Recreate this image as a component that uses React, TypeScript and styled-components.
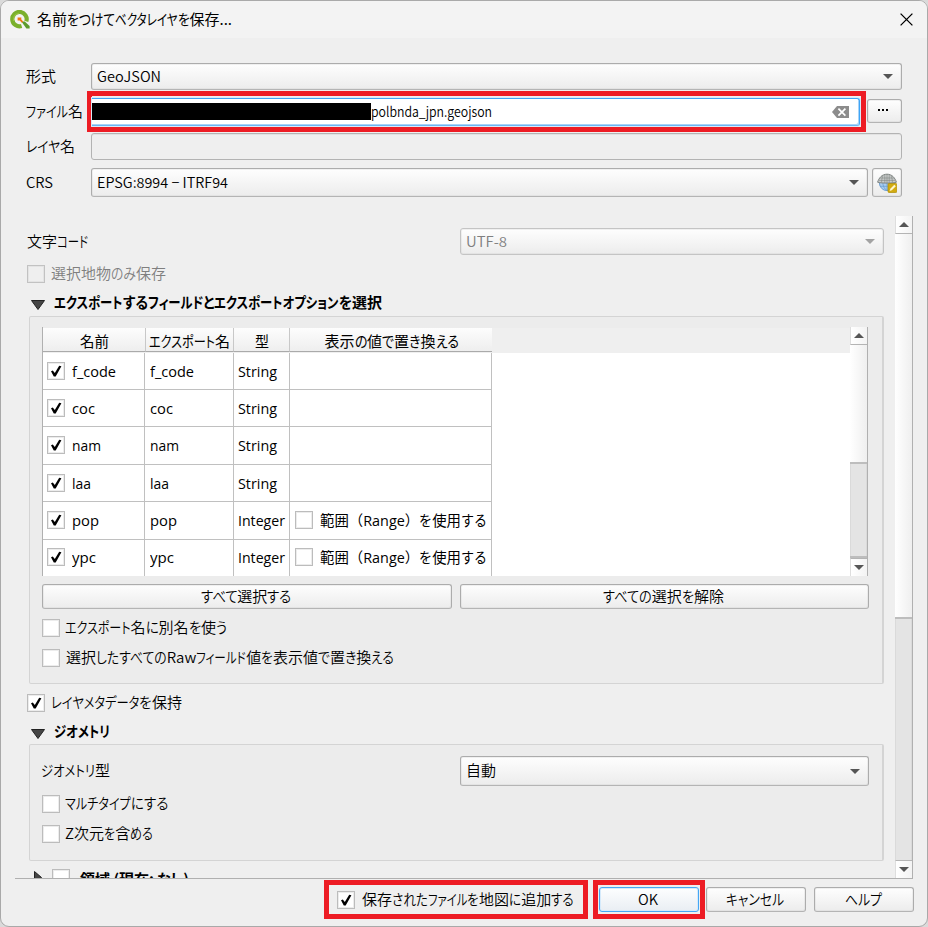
import React, { useLayoutEffect, useRef } from "react";
import styled, { createGlobalStyle, css } from "styled-components";

const uiFont = '"Noto Sans CJK JP", "Liberation Sans", sans-serif';
const tableFont = '"Open Sans", "Noto Sans CJK JP", sans-serif';

const GlobalStyle = createGlobalStyle`
  * { box-sizing: border-box; }
  body {
    margin: 0;
    background: #dadada;
    color: #000;
    font: 350 15px/20px ${uiFont};
    white-space: nowrap;
    overflow: hidden;
  }
`;

/* ---------- text with proportional, condensed kana ---------- */

type Tone = "label" | "title" | "header" | "bold" | "latin" | "table";

const TextLine = styled.span<{ $tone: Tone; $width: number; $dim?: boolean }>`
  display: block;
  flex: none;
  width: ${p => p.$width}px;
  height: 20px;
  margin-bottom: 2px;
  color: ${p => (p.$dim ? "#7f7f7f" : "#000")};
  font-feature-settings: "palt";
  ${p => p.$tone === "title" && css`font-weight: 400;`}
  ${p => p.$tone === "header" && css`font-weight: 400; margin-bottom: 0;`}
  ${p => p.$tone === "bold" && css`font-weight: 700;`}
  ${p => p.$tone === "latin" && css`font-size: 14px;`}
  ${p => p.$tone === "table" && css`
    margin-bottom: 0;
    font-family: ${tableFont};
    font-weight: 400;
    font-size: 14.4px;
    font-feature-settings: normal;
  `}
`;

const Run = styled.span`
  display: inline-block;
  white-space: pre;
  transform-origin: left center;
`;

const KATAKANA = /^[ァ-ヺー]/;
const HIRAGANA = /^[ぁ-ゖ]/;
const kanaScale = (s: string) => (KATAKANA.test(s) ? 0.81 : HIRAGANA.test(s) ? 0.9 : 0);

function Text({ width, tone = "label", dim, children }: { width: number; tone?: Tone; dim?: boolean; children: string }) {
  const ref = useRef<HTMLSpanElement>(null);
  const runs = children.match(/[ァ-ヺー]+|[ぁ-ゖ]+|[^ァ-ヺーぁ-ゖ]+/g) ?? [];

  useLayoutEffect(() => {
    const spans = Array.from(ref.current!.children) as HTMLElement[];
    spans.forEach(s => { s.style.transform = ""; s.style.marginRight = ""; });
    const widths = spans.map(s => s.getBoundingClientRect().width);
    let scales = runs.map(kanaScale);
    if (!scales.some(Boolean)) scales = scales.map(() => 1);
    const fixed = widths.reduce((a, w, i) => a + (scales[i] ? 0 : w), 0);
    const flexible = widths.reduce((a, w, i) => a + w * scales[i], 0);
    const factor = (width - fixed) / flexible;
    spans.forEach((s, i) => {
      if (!scales[i]) return;
      const k = scales[i] * factor;
      s.style.transform = `scaleX(${k})`;
      s.style.marginRight = `${widths[i] * (k - 1)}px`;
    });
  }, [children, width]);

  return (
    <TextLine ref={ref} $tone={tone} $width={width} $dim={dim}>
      {runs.map((r, i) => <Run key={i}>{r}</Run>)}
    </TextLine>
  );
}

/* ---------- icons ---------- */

const Svg = styled.svg`display: block; flex: none;`;

const Arrow = ({ up, color = "#555" }: { up?: boolean; color?: string }) => (
  <Svg width="10" height="5" viewBox="0 0 10 5">
    <path d={up ? "M0 5h10L5 0z" : "M0 0h10L5 5z"} fill={color} />
  </Svg>
);

const QgisLogo = () => (
  <Svg width="20" height="19" viewBox="0 0 20 19">
    <path d="M16.3 11.4A7.2 7.2 0 1 0 11.6 16" fill="none" stroke="#7ab02c" strokeWidth="4.2" />
    <path d="M9 3.4C4 4 3 8 3.6 11" fill="none" stroke="#93c13d" strokeWidth="1.2" />
    <path d="M11.4 11.400h3.400L19.6 16v2.6h-3.2z" fill="#5c9a2b" />
    <path d="M7.600 7.400h3.800l-.2 1.800 2 2.400-1.400 1.200-2-2.400-2.200.2z" fill="#ee7913" />
  </Svg>
);

const CloseIcon = () => (
  <Svg width="13" height="13" viewBox="0 0 13 13">
    <path d="M.6.6l11.8 11.8M12.4.6L.6 12.4" stroke="#000" strokeWidth="1.3" />
  </Svg>
);

const ClearIcon = () => (
  <Svg width="17" height="12" viewBox="0 0 17 12">
    <path d="M0 6L5 0h12v12H5z" fill="#8c8c8c" />
    <path d="M6.4 2.6l7 7M13.4 2.6l-7 7" stroke="#fff" strokeWidth="1.7" />
  </Svg>
);

const CrsIcon = () => (
  <Svg width="20" height="20" viewBox="0 0 20 20">
    <circle cx="10" cy="10" r="7.6" fill="#a9cdf0" stroke="#6c9fd2" />
    <path d="M10 9v9M5.8 9c0 4 1.5 7 4.2 8.5M14.200 9c0 4-1.500 7-4.200 8.500M3 13.300h14" fill="none" stroke="#6c9fd2" strokeWidth=".8" />
    <path d="M.6 9.200C2 4.800 5 1.200 10 1.200s8 3.600 9.400 8c-3 1.200-15.800 1.200-18.800 0z" fill="#c9cccb" stroke="#7e8482" />
    <path d="M10 1.200v9M6 2.500C5 5 4.600 7 4.600 9.800M14 2.500c1 2.500 1.400 4.500 1.400 7.300M7.800 2v8M12.200 2v8M3 5h14M1.800 7.400h16.400" fill="none" stroke="#7e8482" strokeWidth=".6" />
    <rect x="11" y="10.500" width="8.800" height="9" rx="1" fill="#d2ab10" stroke="#ae8c05" strokeWidth=".7" />
    <path d="M12.600 18l.7-2.300 4-4 1.500 1.500-4 4z" fill="#fff6cd" />
  </Svg>
);

const Disclosure = ({ closed }: { closed?: boolean }) => (
  <Svg width="14" height="12" viewBox="0 0 14 12">
    <path d={closed ? "M3.500.5v12L10.500 6.500z" : "M.5 1.500h13L7 10.500z"} fill="#454545" stroke="#222" />
  </Svg>
);

/* ---------- controls ---------- */

const raised = css`
  border: 1px solid #acacac;
  border-bottom-color: #b4b4b4;
  border-radius: 3px;
  background: linear-gradient(#fefefe, #ececec);
  box-shadow: inset 0 0 0 1px rgba(200, 200, 200, 0.25);
`;

const ComboBox = styled.div<{ $width: number; $height: number; $disabled?: boolean }>`
  ${raised}
  display: flex;
  align-items: center;
  justify-content: space-between;
  flex: none;
  width: ${p => p.$width}px;
  height: ${p => p.$height}px;
  padding: 0 8px 0 5px;
  ${p => p.$disabled && css`border-color: #c4c4c4;`}
`;

const Button = styled.div<{ $width: number; $height: number; $focused?: boolean }>`
  ${raised}
  display: flex;
  align-items: center;
  justify-content: center;
  flex: none;
  width: ${p => p.$width}px;
  height: ${p => p.$height}px;
  ${p => p.$width > 30 && css`padding-right: 2px;`}
  ${p => p.$focused && css`
    border-color: #45a7f5;
    background: linear-gradient(#fdfeff, #e9eef3);
    box-shadow: inset 0 0 0 1px #d5eafb;
  `}
`;

const BrowseButton = styled(Button)`
  margin-bottom: 2px;
  padding-right: 4px;
`;

const Box = styled.span<{ $disabled?: boolean }>`
  display: block;
  flex: none;
  width: 18px;
  height: 18px;
  border: 1px solid ${p => (p.$disabled ? "#c2c2c2" : "#bcbcbc")};
  background: ${p => (p.$disabled ? "#efefef" : "#fff")};
  box-shadow: inset 0 0 0 1px ${p => (p.$disabled ? "#e4e4e4" : "#ececec")};
`;

const CheckBox = ({ checked, disabled }: { checked?: boolean; disabled?: boolean }) => (
  <Box $disabled={disabled}>
    {checked && (
      <Svg width="16" height="16" viewBox="0 0 16 16">
        <path d="M3 8.200l1.800-.8 2 2.600 4.400-7.300 2.200.5-5.700 10.300H5.800z" fill="#000" />
      </Svg>
    )}
  </Box>
);

const Option = styled.div<{ $top: number; $gap?: number; $left?: number }>`
  display: flex;
  align-items: center;
  gap: ${p => p.$gap ?? 6}px;
  height: 18px;
  margin: ${p => p.$top}px 0 0 ${p => p.$left ?? 0}px;
`;

const Marked = styled.div<{ $width: number; $height: number }>`
  display: flex;
  align-items: center;
  flex: none;
  width: ${p => p.$width}px;
  height: ${p => p.$height}px;
  border: 5px solid #ed1c24;
`;

/* ---------- window ---------- */

const Window = styled.div`
  display: flex;
  flex-direction: column;
  width: 928px;
  height: 927px;
  overflow: hidden;
  border: 1px solid #a9a9a9;
  border-radius: 9px;
  background: #efefef;
`;

const TitleBar = styled.div`
  display: flex;
  align-items: center;
  flex: none;
  height: 37px;
  padding: 0 14px 0 9px;
  background: #f3f3f3;
`;

const TitleText = styled.div`flex: 1; padding-left: 7px;`;

const Form = styled.div`padding: 25px 0 0 25px;`;

const FormRow = styled.div<{ $height: number; $top?: number }>`
  display: flex;
  align-items: center;
  height: ${p => p.$height}px;
  margin-top: ${p => p.$top ?? 0}px;
`;

const FormLabel = styled.div<{ $width?: number }>`flex: none; width: ${p => p.$width ?? 65}px;`;

const PathInput = styled.div`
  display: flex;
  align-items: center;
  width: 768px;
  height: 28px;
  border: solid #3fa5f6;
  border-width: 1px 1px 1px 0;
  border-bottom-color: #6cb5f2;
  border-radius: 0 3px 3px 0;
  background: #fff;
  box-shadow: 0 0 0 1px #d9eaf8, inset -1px -1px 0 #a8d4f8;
`;

const Redaction = styled.div`flex: none; width: 279px; height: 17px; background: #000;`;
const PathEnd = styled.div`display: flex; flex: 1; justify-content: flex-end; padding-right: 10px;`;

const EmptyInput = styled.div`
  width: 811px;
  height: 27px;
  border: 1px solid #b3b3b3;
  border-radius: 3px;
  background: #efefef;
  box-shadow: inset 0 1px 0 #e2e2e2;
`;

const Dots = styled.div`
  display: flex;
  gap: 2px;
  margin-bottom: 1px;
  span { width: 2px; height: 2px; background: #000; }
`;

const Spacer = styled.div<{ $w: number }>`flex: none; width: ${p => p.$w}px;`;

/* ---------- scrolled options ---------- */

const ScrollArea = styled.div`
  display: flex;
  flex: none;
  width: 898px;
  height: 663px;
  margin: 19px 0 0 14px;
  overflow: hidden;
  border-right: 1px solid #b0b0b0;
  border-bottom: 1px solid #b0b0b0;
`;

const ScrollContent = styled.div`width: 880px; flex: none;`;

const EncodingRow = styled.div`
  display: flex;
  align-items: center;
  height: 27px;
  margin: 12px 0 0 12px;
`;

const Heading = styled.div`
  display: flex;
  align-items: center;
  gap: 9px;
  height: 20px;
  margin: 10px 0 0 16px;
  svg { margin-top: 4px; }
`;

const GroupBox = styled.div<{ $top: number; $height: number }>`
  width: 855px;
  height: ${p => p.$height}px;
  margin: ${p => p.$top}px 0 0 14px;
  padding-left: 12px;
  border: 1px solid #d4d4d4;
  border-right-width: 2px;
  border-radius: 2px;
  background: #ececec;
`;

const ButtonPair = styled.div`display: flex; gap: 8px; margin-top: 8px;`;

const GeometryRow = styled.div`
  display: flex;
  align-items: center;
  height: 30px;
  margin: 11px 0 0 -1px;
`;

const ClippedHeading = styled.div`
  display: flex;
  align-items: flex-start;
  margin: 8px 0 0 16px;
  height: 9px;
  overflow: hidden;
  svg { margin-top: 2px; }
`;

const ScrollBar = styled.div`display: flex; flex-direction: column; flex: none; width: 17px;`;

const ArrowCell = styled.div<{ $h: number; $end?: boolean }>`
  display: flex;
  align-items: center;
  justify-content: center;
  flex: none;
  height: ${p => p.$h}px;
  border-left: 1px solid #dedede;
  ${p => (p.$end ? "border-top" : "border-bottom")}: 1px solid #b4b4b4;
  background: linear-gradient(90deg, #fff, #f3f3f3);
`;

const Thumb = styled.div<{ $h: number }>`
  flex: none;
  height: ${p => p.$h}px;
  border-bottom: 2px solid #bdbdbd;
  background: linear-gradient(90deg, #fff, #efefef);
`;

const Groove = styled.div`
  flex: 1;
  border: solid #dadada;
  border-width: 0 1px;
  background: #e4e4e4;
`;

/* ---------- field table ---------- */

const TableFrame = styled.div`
  display: flex;
  width: 826px;
  height: 249px;
  margin-top: 10px;
  overflow: hidden;
  border: solid #b0b0b0;
  border-width: 0 1px;
  background: #fff;
`;

const TableBody = styled.div`width: 807px; flex: none; padding-top: 1px; background: #ececec;`;
const HeaderStrip = styled.div`display: flex; height: 25px; background: #efefef;`;

const HeaderCell = styled.div<{ $w: number }>`
  display: flex;
  align-items: center;
  justify-content: center;
  width: ${p => p.$w}px;
  height: 24px;
  padding-top: 3px;
  border-right: 1px solid #c8c8c8;
  border-bottom: 1px solid #aaa;
  background: linear-gradient(#fdfdfd, #eee);
  &:last-child { border-right: 0; padding-left: 1px; }
`;

const Rows = styled.div`height: 223px; overflow: hidden; background: #fff;`;
const TableRow = styled.div<{ $h: number }>`
  display: flex;
  height: ${p => p.$h}px;
`;
const Cell = styled.div<{ $w: number; $pad?: number; $last?: boolean }>`
  display: flex;
  align-items: center;
  gap: 7px;
  width: ${p => p.$w}px;
  padding: ${p => (p.$last ? 0 : 1)}px 0 0 ${p => p.$pad ?? 4}px;
  border-right: 1px solid #c0c0c0;
  border-bottom: ${p => (p.$last ? 0 : 1)}px solid #c0c0c0;
  ${Box} { margin-bottom: 2px; }
`;

const fields = [
  { name: "f_code", width: 44, type: "String", h: 37 },
  { name: "coc", width: 23, type: "String", h: 37 },
  { name: "nam", width: 29, type: "String", h: 38 },
  { name: "laa", width: 19, type: "String", h: 37 },
  { name: "pop", width: 27, type: "Integer", h: 38 },
  { name: "ypc", width: 24, type: "Integer", h: 36 },
];

const FieldTable = () => (
  <TableFrame>
    <TableBody>
      <HeaderStrip>
        <HeaderCell $w={103}><Text tone="header" width={29}>名前</Text></HeaderCell>
        <HeaderCell $w={88}><Text tone="header" width={81}>エクスポート名</Text></HeaderCell>
        <HeaderCell $w={56}><Text tone="header" width={14}>型</Text></HeaderCell>
        <HeaderCell $w={202}><Text tone="header" width={134}>表示の値で置き換える</Text></HeaderCell>
      </HeaderStrip>
      <Rows>
        {fields.map((f, i) => {
          const last = i === fields.length - 1;
          return (
            <TableRow key={f.name} $h={f.h}>
              <Cell $w={102} $last={last}><CheckBox checked /><Text tone="table" width={f.width}>{f.name}</Text></Cell>
              <Cell $w={89} $pad={5} $last={last}><Text tone="table" width={f.width}>{f.name}</Text></Cell>
              <Cell $w={56} $pad={4} $last={last}><Text tone="table" width={f.type === "String" ? 39 : 47}>{f.type}</Text></Cell>
              <Cell $w={202} $pad={5} $last={last}>
                {f.type === "Integer" && <><CheckBox /><Text tone="table" width={167}>範囲（Range）を使用する</Text></>}
              </Cell>
            </TableRow>
          );
        })}
      </Rows>
    </TableBody>
    <ScrollBar>
      <ArrowCell $h={18}><Arrow up /></ArrowCell>
      <Thumb $h={119} />
      <Groove />
      <Thumb $h={2} />
      <ArrowCell $h={18} $end><Arrow /></ArrowCell>
    </ScrollBar>
  </TableFrame>
);

const Footer = styled.div`
  display: flex;
  align-items: center;
  flex: none;
  height: 39px;
  margin: 1px 0 0 323px;
`;

export default function App() {
  return (
    <>
      <GlobalStyle />
      <Window>
        <TitleBar>
          <QgisLogo />
          <TitleText><Text tone="title" width={195}>名前をつけてベクタレイヤを保存...</Text></TitleText>
          <CloseIcon />
        </TitleBar>

        <Form>
          <FormRow $height={27}>
            <FormLabel><Text width={30}>形式</Text></FormLabel>
            <ComboBox $width={811} $height={27}><Text tone="latin" width={64}>GeoJSON</Text><Arrow /></ComboBox>
          </FormRow>
          <FormRow $height={41} $top={1}>
            <FormLabel $width={61}><Text width={57}>ファイル名</Text></FormLabel>
            <Marked $width={779} $height={41}>
              <PathInput>
                <Redaction />
                <Text tone="latin" width={121}>polbnda_jpn.geojson</Text>
                <PathEnd><ClearIcon /></PathEnd>
              </PathInput>
            </Marked>
            <Spacer $w={1} />
            <BrowseButton $width={35} $height={24}><Dots><span /><span /><span /></Dots></BrowseButton>
          </FormRow>
          <FormRow $height={27} $top={1}>
            <FormLabel><Text width={49}>レイヤ名</Text></FormLabel>
            <EmptyInput />
          </FormRow>
          <FormRow $height={29} $top={8}>
            <FormLabel><Text tone="latin" width={27}>CRS</Text></FormLabel>
            <ComboBox $width={777} $height={29}><Text tone="latin" width={131}>EPSG:8994 − ITRF94</Text><Arrow /></ComboBox>
            <Spacer $w={4} />
            <Button $width={30} $height={29}><CrsIcon /></Button>
          </FormRow>
        </Form>

        <ScrollArea>
          <ScrollContent>
            <EncodingRow>
              <Text width={61}>文字コード</Text>
              <Spacer $w={372} />
              <ComboBox $width={424} $height={27} $disabled><Text tone="latin" width={41} dim>UTF-8</Text><Arrow color="#a3a3a3" /></ComboBox>
            </EncodingRow>
            <Option $top={10} $left={12}><CheckBox disabled /><Text width={115} dim>選択地物のみ保存</Text></Option>

            <Heading><Disclosure /><Text tone="bold" width={328}>エクスポートするフィールドとエクスポートオプションを選択</Text></Heading>
            <GroupBox $top={3} $height={368}>
              <FieldTable />
              <ButtonPair>
                <Button $width={410} $height={25}><Text width={91}>すべて選択する</Text></Button>
                <Button $width={409} $height={25}><Text width={121}>すべての選択を解除</Text></Button>
              </ButtonPair>
              <Option $top={10} $gap={5}><CheckBox /><Text width={162}>エクスポート名に別名を使う</Text></Option>
              <Option $top={12}><CheckBox /><Text width={328}>選択したすべてのRawフィールド値を表示値で置き換える</Text></Option>
            </GroupBox>

            <Option $top={10} $left={12}><CheckBox checked /><Text width={131}>レイヤメタデータを保持</Text></Option>

            <Heading><Disclosure /><Text tone="bold" width={56}>ジオメトリ</Text></Heading>
            <GroupBox $top={2} $height={117}>
              <GeometryRow>
                <Text width={69}>ジオメトリ型</Text>
                <Spacer $w={350} />
                <ComboBox $width={409} $height={30}><Text width={30}>自動</Text><Arrow /></ComboBox>
              </GeometryRow>
              <Option $top={9} $gap={5}><CheckBox /><Text width={103}>マルチタイプにする</Text></Option>
              <Option $top={12} $gap={5}><CheckBox /><Text width={88}>Z次元を含める</Text></Option>
            </GroupBox>

            <ClippedHeading>
              <Disclosure closed />
              <Spacer $w={7} />
              <CheckBox />
              <Spacer $w={10} />
              <Text tone="bold" width={109}>領域 (現在: なし)</Text>
            </ClippedHeading>
          </ScrollContent>
          <ScrollBar>
            <ArrowCell $h={18}><Arrow up /></ArrowCell>
            <Thumb $h={385} />
            <Groove />
            <ArrowCell $h={18} $end><Arrow /></ArrowCell>
          </ScrollBar>
        </ScrollArea>

        <Footer>
          <Marked $width={264} $height={39}>
            <Spacer $w={8} />
            <CheckBox checked />
            <Spacer $w={7} />
            <Text width={212}>保存されたファイルを地図に追加する</Text>
          </Marked>
          <Spacer $w={5} />
          <Marked $width={112} $height={39}>
            <Spacer $w={1} />
            <Button $width={100} $height={25} $focused><Text tone="latin" width={20}>OK</Text></Button>
          </Marked>
          <Spacer $w={1} />
          <Button $width={100} $height={25}><Text width={58}>キャンセル</Text></Button>
          <Spacer $w={8} />
          <Button $width={100} $height={25}><Text width={37}>ヘルプ</Text></Button>
        </Footer>
      </Window>
    </>
  );
}
